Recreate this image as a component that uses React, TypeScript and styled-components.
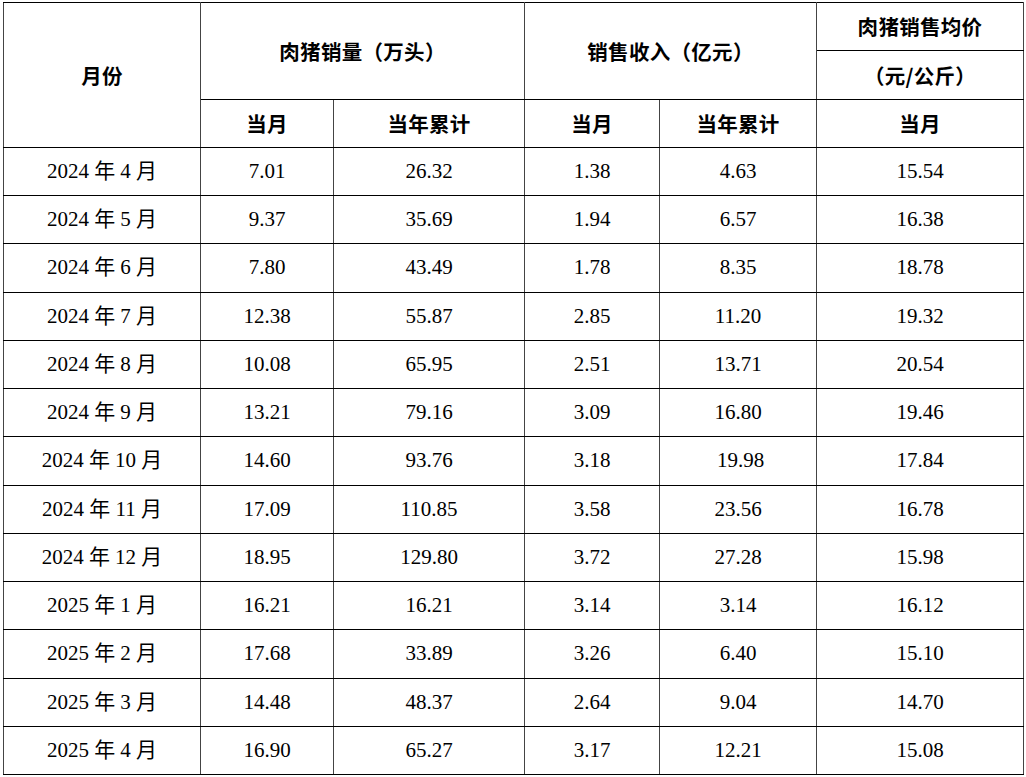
import React from 'react';
import styled, {createGlobalStyle} from 'styled-components';

const GlobalStyle = createGlobalStyle`
    html, body {
        margin: 0;
        padding: 0;
        background: #ffffff;
    }
`;

const Page = styled.div`
    padding-top: 2px;
    padding-left: 3px;
    width: 1026px;
    box-sizing: border-box;
`;

const Table = styled.table`
    border-collapse: collapse;
    table-layout: fixed;
    width: 1020px;
    color: #000;
`;

const Row = styled.tr`
    height: 48.25px;
`;

const HeadCell = styled.th`
    border-top: 1px solid #000;
    border-bottom: 1px solid #000;
    border-left: 1px solid #444;
    border-right: 1px solid #444;
    padding: 0;
    text-align: center;
    vertical-align: middle;
    font-family: "Noto Sans CJK SC", "Noto Sans", sans-serif;
    font-weight: 700;
    font-size: 20.5px;
    letter-spacing: 0.3px;
    line-height: 1;
`;

const DataCell = styled.td`
    border-top: 1px solid #000;
    border-bottom: 1px solid #000;
    border-left: 1px solid #444;
    border-right: 1px solid #444;
    padding: 0;
    text-align: center;
    vertical-align: middle;
    font-family: "Liberation Serif", "Noto Sans CJK SC", serif;
    font-size: 21px;
    line-height: 1;
`;

const widths = [197, 133, 191, 135, 157, 207];

type Entry = {
    month: string;
    values: string[];
};

const rows: Entry[] = [
    {month: '2024 年 4 月', values: ['7.01', '26.32', '1.38', '4.63', '15.54']},
    {month: '2024 年 5 月', values: ['9.37', '35.69', '1.94', '6.57', '16.38']},
    {month: '2024 年 6 月', values: ['7.80', '43.49', '1.78', '8.35', '18.78']},
    {month: '2024 年 7 月', values: ['12.38', '55.87', '2.85', '11.20', '19.32']},
    {month: '2024 年 8 月', values: ['10.08', '65.95', '2.51', '13.71', '20.54']},
    {month: '2024 年 9 月', values: ['13.21', '79.16', '3.09', '16.80', '19.46']},
    {month: '2024 年 10 月', values: ['14.60', '93.76', '3.18', '\u00a019.98', '17.84']},
    {month: '2024 年 11 月', values: ['17.09', '110.85', '3.58', '23.56', '16.78']},
    {month: '2024 年 12 月', values: ['18.95', '129.80', '3.72', '27.28', '15.98']},
    {month: '2025 年 1 月', values: ['16.21', '16.21', '3.14', '3.14', '16.12']},
    {month: '2025 年 2 月', values: ['17.68', '33.89', '3.26', '6.40', '15.10']},
    {month: '2025 年 3 月', values: ['14.48', '48.37', '2.64', '9.04', '14.70']},
    {month: '2025 年 4 月', values: ['16.90', '65.27', '3.17', '12.21', '15.08']},
];

const App: React.FC = () => (
    <Page>
        <GlobalStyle />
        <Table>
            <colgroup>
                {widths.map((w, i) => (
                    <col key={i} style={{width: w}} />
                ))}
            </colgroup>
            <thead>
                <Row>
                    <HeadCell rowSpan={3}>月份</HeadCell>
                    <HeadCell colSpan={2} rowSpan={2}>肉猪销量（万头）</HeadCell>
                    <HeadCell colSpan={2} rowSpan={2}>销售收入（亿元）</HeadCell>
                    <HeadCell>肉猪销售均价</HeadCell>
                </Row>
                <Row>
                    <HeadCell>（元/公斤）</HeadCell>
                </Row>
                <Row>
                    <HeadCell>当月</HeadCell>
                    <HeadCell>当年累计</HeadCell>
                    <HeadCell>当月</HeadCell>
                    <HeadCell>当年累计</HeadCell>
                    <HeadCell>当月</HeadCell>
                </Row>
            </thead>
            <tbody>
                {rows.map(r => (
                    <Row key={r.month}>
                        <DataCell>{r.month}</DataCell>
                        {r.values.map((v, i) => (
                            <DataCell key={i}>{v}</DataCell>
                        ))}
                    </Row>
                ))}
            </tbody>
        </Table>
    </Page>
);

export default App;
